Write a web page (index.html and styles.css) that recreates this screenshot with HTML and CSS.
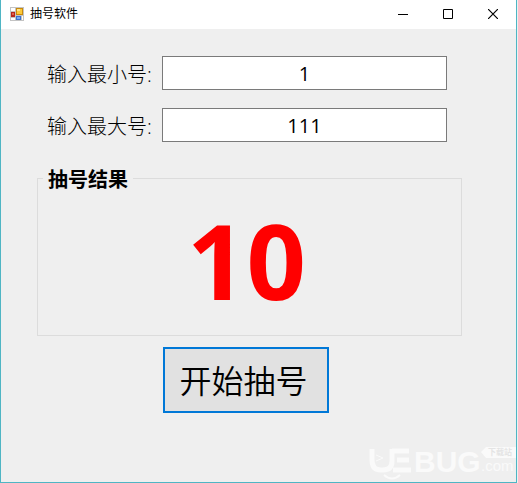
FILE: index.html
```
<!DOCTYPE html>
<html lang="zh-CN">
<head>
    <meta charset="UTF-8">
    <meta name="viewport" content="width=device-width, initial-scale=1.0">
    <title>抽号软件</title>
    <link rel="stylesheet" href="styles.css">
</head>
<body>
    <div class="window">
        <header class="titlebar">
            <svg class="app-icon" width="14" height="14" viewBox="0 0 14 14">
                <rect width="14" height="14" fill="#c3c3c3"/>
                <path d="M1 1h4v3H1zM1 11h4v2H1zM12 9h1v4h-1z" fill="#fff"/>
                <rect x="1" y="5" width="4" height="5" fill="#b5281c"/>
                <rect x="2" y="6" width="2" height="2" fill="#e0604c"/>
                <rect x="6" y="1" width="7" height="7" fill="#c98a0c"/>
                <rect x="7" y="2" width="5" height="5" fill="#fcc93a"/>
                <rect x="7" y="2" width="3" height="2" fill="#ffe48a"/>
                <rect x="6" y="9" width="5" height="4" fill="#3a73d0"/>
                <rect x="7" y="10" width="3" height="2" fill="#7aaaf0"/>
            </svg>
            <h1>抽号软件</h1>
            <button class="win-btn" aria-label="最小化">
                <svg width="10" height="10" viewBox="0 0 10 10"><path d="M0 5.500h10" stroke="#000"/></svg>
            </button>
            <button class="win-btn" aria-label="最大化">
                <svg width="10" height="10" viewBox="0 0 10 10"><path d="M.5.5h9v9h-9z" fill="none" stroke="#000"/></svg>
            </button>
            <button class="win-btn" aria-label="关闭">
                <svg width="10" height="10" viewBox="0 0 10 10"><path d="M0 0l10 10M10 0L0 10" stroke="#000" stroke-width="1.200"/></svg>
            </button>
        </header>
        <main class="content">
            <div class="row">
                <label for="min">输入最小号:</label>
                <input type="text" id="min" value="1">
            </div>
            <div class="row">
                <label for="max">输入最大号:</label>
                <input type="text" id="max" value="111">
            </div>
            <fieldset class="result">
                <legend>抽号结果</legend>
                <output id="number" for="min max">10</output>
            </fieldset>
            <button class="start" id="start">开始抽号</button>
        </main>
        <svg class="watermark" width="147" height="37" viewBox="0 0 147 37">
            <path d="M3 4v11q0 10 9 10h2q9 0 9-9V4" fill="none" stroke="#fafafa" stroke-width="5"/>
            <path d="M7 10l7 3-7 3" fill="none" stroke="#fafafa"/>
            <path d="M23 6h17M28 15h12M24 25h18" fill="none" stroke="#fafafa" stroke-width="5"/>
            <path d="M15 30q8 7 16 0" fill="none" stroke="#fafafa" stroke-width="2"/>
            <text x="45" y="27" class="mark-name">BUG</text>
            <path d="M112 7l5-5h30v11h-30z" fill="#fafafa"/>
            <text x="119" y="10" class="mark-tag">下载站</text>
            <text x="112" y="26" class="mark-domain">.com</text>
        </svg>
    </div>

    <script>
        const output = document.getElementById('number');

        document.getElementById('start').addEventListener('click', () => {
            const min = parseInt(document.getElementById('min').value);
            const max = parseInt(document.getElementById('max').value);
            if (isNaN(min) || isNaN(max) || min > max) return;
            output.textContent = Math.floor(Math.random() * (max - min + 1)) + min;
        });
    </script>
</body>
</html>
```
FILE: styles.css
```
* {
    box-sizing: border-box;
}
body {
    margin: 0;
    padding-right: 1px;
    background: #efefef;
    font-family: "Open Sans", "Noto Sans CJK SC", sans-serif;
    color: #000;
}
.window {
    position: relative;
    display: flex;
    flex-direction: column;
    min-height: 100vh;
    border: 1px solid #4fb5c4;
    border-top: 0;
    background: #efefef;
}
.titlebar {
    display: flex;
    align-items: center;
    height: 29px;
    padding: 0 1px 2px 9px;
    background: #fff;
}
.titlebar h1 {
    flex: 1;
    margin: 0 0 0 6px;
    font-size: 12px;
    line-height: 16px;
    font-weight: 400;
}
.win-btn {
    display: flex;
    align-items: center;
    justify-content: center;
    width: 45px;
    height: 26px;
    padding: 0;
    border: 0;
    background: none;
}
.win-btn:hover {
    background: #e5e5e5;
}
.content {
    display: flex;
    flex-direction: column;
    padding: 27px 54px 20px 36px;
}
.row {
    display: flex;
    align-items: center;
    margin: 0 15px 18px 10px;
}
.row label {
    width: 115px;
    padding-top: 4px;
    font-size: 20px;
    line-height: 30px;
    font-weight: 300;
}
.row input {
    flex: 1;
    min-width: 0;
    height: 34px;
    padding: 0;
    border: 1px solid #7a7a7a;
    background: #fff;
    font-family: inherit;
    font-size: 20px;
    text-align: center;
    color: #000;
    outline: none;
}
.result {
    margin: 4px 0 0;
    padding: 3px 0 10px;
    border: 1px solid #dcdcdc;
    min-width: 0;
}
.result legend {
    margin-left: 5px;
    padding: 4px 5px 0;
    font-size: 20px;
    line-height: 24px;
    font-weight: 700;
}
.result output {
    display: block;
    padding-right: 6px;
    font-size: 104px;
    line-height: 130px;
    font-weight: 700;
    text-align: center;
    color: #f00;
}
.start {
    align-self: center;
    width: 166px;
    height: 66px;
    margin: 11px 8px 0 0;
    padding: 0 4px 2px 0;
    border: 2px solid #0078d7;
    background: #e1e1e1;
    font-family: inherit;
    font-size: 32px;
    font-weight: 350;
    color: #000;
}
.watermark {
    position: absolute;
    right: 0;
    bottom: 0;
}
.mark-name {
    font-family: "Liberation Sans", sans-serif;
    font-size: 30px;
    font-weight: 700;
    fill: #fafafa;
}
.mark-tag {
    font-family: "Noto Sans CJK SC", sans-serif;
    font-size: 8px;
    font-weight: 700;
    fill: #e4e4e4;
}
.mark-domain {
    font-family: "Liberation Sans", sans-serif;
    font-size: 15px;
    fill: #fafafa;
}
```
